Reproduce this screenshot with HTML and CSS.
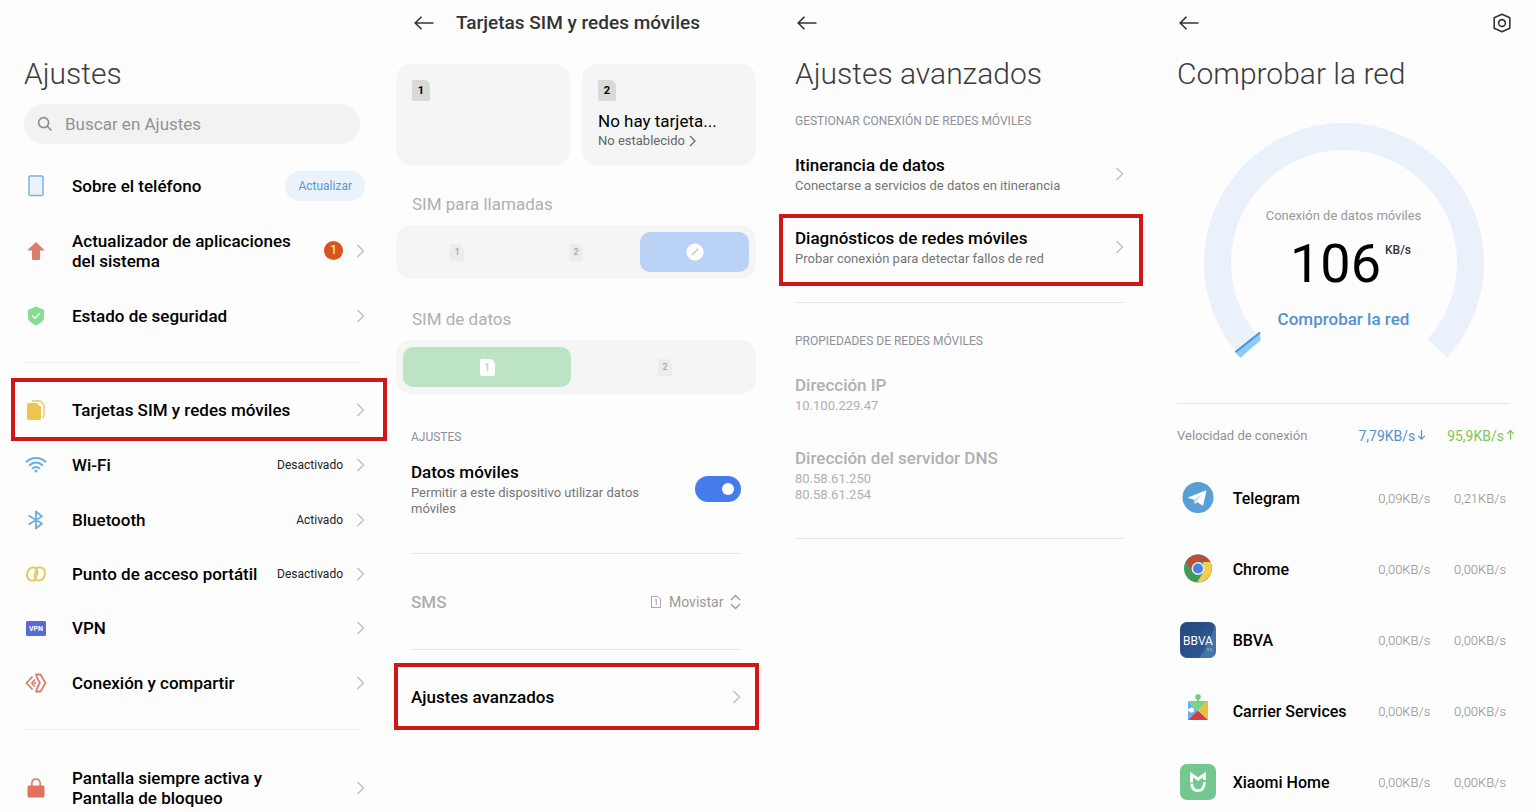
FILE: index.html
```html
<!DOCTYPE html>
<html lang="es">
<head>
<meta charset="utf-8">
<title>Ajustes</title>
<link rel="stylesheet" href="styles.css">
</head>
<body>
<svg class="defs" aria-hidden="true">
  <symbol id="chevron" viewBox="0 0 9 16"><path d="M1.500 2 7.500 8l-6 6" fill="none" stroke="currentColor" stroke-width="1.300"/></symbol>
  <symbol id="back" viewBox="0 0 20 16"><path d="M19.500 8H1.200M7.500 1.800 1.200 8l6.300 6.200" fill="none" stroke="currentColor" stroke-width="1.600"/></symbol>
</svg>
<main class="screens">

  <section class="screen screen-settings">
    <h1 class="title">Ajustes</h1>
    <label class="search">
      <svg width="16" height="16" viewBox="0 0 16 16" fill="none" stroke="#8c8c8c" stroke-width="1.600"><circle cx="6.600" cy="6.600" r="5"/><path d="m10.300 10.300 4.200 4.200"/></svg>
      <input type="search" placeholder="Buscar en Ajustes" aria-label="Buscar en Ajustes">
    </label>

    <nav class="list list-tall">
      <div class="row">
        <span class="row-icon"><svg width="16" height="22" viewBox="0 0 16 22"><rect x="1" y="1" width="14" height="19.500" rx="1" fill="#e8f3fd" stroke="#7fb2dc" stroke-width="1.500"/></svg></span>
        <span class="row-name">Sobre el teléfono</span>
        <button class="pill" type="button">Actualizar</button>
      </div>
      <a class="row" href="#">
        <span class="row-icon"><svg width="18" height="20" viewBox="0 0 18 20"><path d="M9 1 .8 8.800Q.6 9.600 1.400 9.600H5V18q0 1 1 1h6q1 0 1-1V9.600h3.600q.8 0 .6-.8z" fill="#df7d6c"/></svg></span>
        <span class="row-name">Actualizador de aplicaciones del sistema</span>
        <span class="badge">1</span>
        <svg class="chevron"><use href="#chevron"/></svg>
      </a>
      <a class="row" href="#">
        <span class="row-icon"><svg width="18" height="20" viewBox="0 0 18 20"><path d="M9 .5 17 4v8q0 3.500-8 7.500-8-4-8-7.500V4z" fill="#86dc91"/><path d="m5.300 9.500 2.700 2.700 4.800-4.900" fill="none" stroke="#fff" stroke-width="1.600"/></svg></span>
        <span class="row-name">Estado de seguridad</span>
        <svg class="chevron"><use href="#chevron"/></svg>
      </a>
    </nav>
    <hr class="rule">
    <nav class="list">
      <a class="row highlight" href="#">
        <span class="row-icon"><svg width="20" height="22" viewBox="0 0 20 22"><path d="M6 1.800h6.500q2 0 3.300 1.300 2.200 2 2.200 4V16q0 2.200-1.600 3" fill="none" stroke="#eed07a" stroke-width="1.700"/><path d="M3 4h7.500L15 8v11q0 2-2 2H3q-2 0-2-2V6q0-2 2-2z" fill="#ecc54a"/></svg></span>
        <span class="row-name">Tarjetas SIM y redes móviles</span>
        <svg class="chevron"><use href="#chevron"/></svg>
      </a>
    </nav>
    <nav class="list list-network">
      <a class="row" href="#">
        <span class="row-icon"><svg width="22" height="18" viewBox="0 0 22 18" fill="none" stroke="#6eaee0" stroke-width="2"><path d="M1 6.200Q5.500 2 11 2t10 4.200M4.200 9.700Q7.300 6.600 11 6.600t6.800 3.100M7.200 12.800Q9 11 11 11t3.800 1.800"/><circle cx="11" cy="15" r="1.500" fill="#6eaee0" stroke="none"/></svg></span>
        <span class="row-name">Wi-Fi</span>
        <span class="status">Desactivado</span>
        <svg class="chevron"><use href="#chevron"/></svg>
      </a>
      <a class="row" href="#">
        <span class="row-icon"><svg width="18" height="20" viewBox="0 0 18 20"><path d="m1.500 5.500 13.500 8L9 18.500v-17L15 6.500l-13.500 8" fill="none" stroke="#73addc" stroke-width="1.900" stroke-linejoin="round"/></svg></span>
        <span class="row-name">Bluetooth</span>
        <span class="status">Activado</span>
        <svg class="chevron"><use href="#chevron"/></svg>
      </a>
      <a class="row" href="#">
        <span class="row-icon"><svg width="22" height="18" viewBox="0 0 22 18" fill="none" stroke="#e6c960" stroke-width="2" stroke-linecap="round"><path d="M10.500 14.600C7 17.200 2 15 2 9.800 2 5 5.300 2.200 8.500 2.500c3.800.3 4.600 4.500 3.300 7.500L10.300 13"/><path d="M11.500 3.400C15 .8 20 3 20 8.200c0 4.800-3.300 7.600-6.500 7.300-3.800-.3-4.600-4.500-3.300-7.500L11.700 5"/></svg></span>
        <span class="row-name">Punto de acceso portátil</span>
        <span class="status">Desactivado</span>
        <svg class="chevron"><use href="#chevron"/></svg>
      </a>
      <a class="row" href="#">
        <span class="row-icon"><svg width="20" height="15" viewBox="0 0 20 15"><rect width="20" height="15" rx="1.500" fill="#5a68d8"/><text class="vpn-text" x="10" y="10" text-anchor="middle">VPN</text></svg></span>
        <span class="row-name">VPN</span>
        <svg class="chevron"><use href="#chevron"/></svg>
      </a>
      <a class="row" href="#">
        <span class="row-icon"><svg width="22" height="20" viewBox="0 0 22 20" fill="none" stroke="#d8806e" stroke-width="1.800" stroke-linejoin="round"><path d="M7.500 3.500 1.500 10l6 6.500M10 6.500 6.800 10l3.200 3.500M10 9v2"/><path d="M11 1.500h4.500l5 8.500-5 8.500H11l1.200-3.500L14.800 10 12.200 5z"/></svg></span>
        <span class="row-name">Conexión y compartir</span>
        <svg class="chevron"><use href="#chevron"/></svg>
      </a>
    </nav>
    <hr class="rule rule-lower">
    <nav class="list list-last">
      <a class="row" href="#">
        <span class="row-icon"><svg width="18" height="20" viewBox="0 0 18 20"><path d="M4.800 8V5.500Q4.800 1.200 9 1.200t4.200 4.300V8" fill="none" stroke="#d98372" stroke-width="1.700"/><rect x=".5" y="7.500" width="17" height="12" rx="1.500" fill="#e4715c"/></svg></span>
        <span class="row-name">Pantalla siempre activa y Pantalla de bloqueo</span>
        <svg class="chevron"><use href="#chevron"/></svg>
      </a>
    </nav>
  </section>

  <section class="screen screen-sim">
    <header class="bar">
      <button class="icon-button" type="button" aria-label="Atrás"><svg class="back"><use href="#back"/></svg></button>
      <h1 class="bar-title">Tarjetas SIM y redes móviles</h1>
    </header>
    <div class="cards">
      <article class="card"><span class="sim">1</span></article>
      <article class="card">
        <span class="sim">2</span>
        <h2 class="card-title">No hay tarjeta...</h2>
        <a class="card-link" href="#">No establecido <svg width="7" height="12" viewBox="0 0 7 12"><path d="m1 1 5 5-5 5" fill="none" stroke="#666" stroke-width="1.300"/></svg></a>
      </article>
    </div>
    <h2 class="group-label">SIM para llamadas</h2>
    <div class="segments">
      <label class="segment"><input type="radio" name="calls" disabled><span class="sim sim-faded">1</span></label>
      <label class="segment"><input type="radio" name="calls" disabled><span class="sim sim-faded">2</span></label>
      <label class="segment segment-blue"><input type="radio" name="calls" checked disabled aria-label="Ninguna"><svg width="18" height="18" viewBox="0 0 18 18"><circle cx="9" cy="9" r="8.600" fill="#fff"/><path d="m6 12 6-6" stroke="#bcc4d0" stroke-width="1.500"/></svg></label>
    </div>
    <h2 class="group-label">SIM de datos</h2>
    <div class="segments">
      <label class="segment segment-green"><input type="radio" name="data" checked disabled><span class="sim sim-white">1</span></label>
      <label class="segment"><input type="radio" name="data" disabled><span class="sim sim-faded">2</span></label>
    </div>
    <div class="sim-settings">
      <h2 class="section-label">AJUSTES</h2>
      <label class="option">
        <span class="option-text">
          <span class="option-name">Datos móviles</span>
          <span class="option-note">Permitir a este dispositivo utilizar datos móviles</span>
        </span>
        <input class="toggle" type="checkbox" checked>
      </label>
      <hr class="line">
      <div class="sms">
        <label class="sms-label" for="sms">SMS</label>
        <svg width="10" height="12" viewBox="0 0 10 12"><path d="M.5.500h6.500L9.500 3v8.500h-9z" fill="none" stroke="#aaa"/><path d="M3.800 4.200 5.300 3.500V9" fill="none" stroke="#aaa"/></svg>
        <select class="select" id="sms" disabled><option>Movistar</option></select>
        <svg width="11" height="16" viewBox="0 0 11 16" fill="none" stroke="#999" stroke-width="1.300"><path d="M1 6 5.500 1.500 10 6M1 10l4.500 4.500L10 10"/></svg>
      </div>
      <hr class="line">
    </div>
    <a class="advanced highlight" href="#">
      <span class="option-name">Ajustes avanzados</span>
      <svg class="chevron"><use href="#chevron"/></svg>
    </a>
  </section>

  <section class="screen screen-advanced">
    <header class="bar">
      <button class="icon-button" type="button" aria-label="Atrás"><svg class="back"><use href="#back"/></svg></button>
    </header>
    <h1 class="title">Ajustes avanzados</h1>
    <h2 class="section-label">GESTIONAR CONEXIÓN DE REDES MÓVILES</h2>
    <a class="option" href="#">
      <span class="option-text">
        <span class="option-name">Itinerancia de datos</span>
        <span class="option-note">Conectarse a servicios de datos en itinerancia</span>
      </span>
      <svg class="chevron"><use href="#chevron"/></svg>
    </a>
    <a class="option diagnostics highlight" href="#">
      <span class="option-text">
        <span class="option-name">Diagnósticos de redes móviles</span>
        <span class="option-note">Probar conexión para detectar fallos de red</span>
      </span>
      <svg class="chevron"><use href="#chevron"/></svg>
    </a>
    <hr class="line">
    <h2 class="section-label section-properties">PROPIEDADES DE REDES MÓVILES</h2>
    <dl class="properties">
      <div class="property"><dt>Dirección IP</dt><dd>10.100.229.47</dd></div>
      <div class="property"><dt>Dirección del servidor DNS</dt><dd>80.58.61.250</dd><dd>80.58.61.254</dd></div>
    </dl>
    <hr class="line">
  </section>

  <section class="screen screen-network">
    <header class="bar">
      <button class="icon-button" type="button" aria-label="Atrás"><svg class="back"><use href="#back"/></svg></button>
      <button class="icon-button" type="button" aria-label="Configuración"><svg width="20" height="20" viewBox="0 0 20 20" fill="none" stroke="#333" stroke-width="1.600" stroke-linejoin="round"><path d="m10 1.300 7.800 3.500v10.400L10 18.700l-7.800-3.500V4.800z"/><circle cx="10" cy="10" r="3.400"/></svg></button>
    </header>
    <h1 class="title">Comprobar la red</h1>
    <div class="gauge">
      <svg class="gauge-arc" width="280" height="236" viewBox="0 0 280 236"><path d="M46.600 225.300A126.500 126.500 0 1 1 233.400 225.300" fill="none" stroke="#ebf1fb" stroke-width="27"/><path d="m31 229 5.500 6q9-9 20-17.500l-.5-8.500z" fill="#8acbfa"/><path d="M31.500 229 56 209.500" stroke="#4c8fcb" stroke-width="1.800"/></svg>
      <div class="gauge-info">
        <span class="gauge-note">Conexión de datos móviles</span>
        <p class="speed"><span class="speed-number">106</span><span class="speed-unit">KB/s</span></p>
        <a class="check" href="#">Comprobar la red</a>
      </div>
    </div>
    <hr class="line line-network">
    <table class="apps">
      <thead>
        <tr><th class="apps-caption" colspan="2">Velocidad de conexión</th><th class="down">7,79KB/s<svg width="9" height="12" viewBox="0 0 9 12"><path d="M4.500 1v9M1.200 6.800l3.300 3.400 3.300-3.400" fill="none" stroke="currentColor" stroke-width="1.200"/></svg></th><th class="up">95,9KB/s<svg width="9" height="12" viewBox="0 0 9 12"><path d="M4.500 10.500V1.500M1.200 4.900l3.300-3.400 3.300 3.400" fill="none" stroke="currentColor" stroke-width="1.200"/></svg></th></tr>
      </thead>
      <tbody>
        <tr><td class="app-icon"><svg width="38" height="38" viewBox="0 0 38 38"><circle cx="19" cy="18.500" r="15.500" fill="#5a9fd4"/><path d="m8.500 18.700 18-7.200q1-.3.800.9l-3 13.400q-.4 1.200-1.400.5l-4.600-3.400-2.400 2.300-.8-4.400z" fill="#fff"/><path d="m15.100 20.800 9-6.100-6.800 7-.6 3z" fill="#bfd9ee"/></svg></td><th class="app-name">Telegram</th><td class="rate">0,09KB/s</td><td class="rate rate-up">0,21KB/s</td></tr>
        <tr><td class="app-icon"><svg width="38" height="38" viewBox="0 0 38 38"><circle cx="19" cy="18.500" r="14" fill="#429b59"/><path d="M30.900 11Q34.500 18 31.500 24.500 27 32.300 18 32.500L24.800 21.500 24 12z" fill="#f0d04c"/><path d="M6.900 11.500A14 14 0 0 1 31.100 11.500v.5H19l-6.200 9.700z" fill="#bd4c40"/><circle cx="19" cy="18.500" r="6.500" fill="#e7f0f3"/><circle cx="19" cy="18.500" r="5" fill="#4d82df"/></svg></td><th class="app-name">Chrome</th><td class="rate">0,00KB/s</td><td class="rate rate-up">0,00KB/s</td></tr>
        <tr><td class="app-icon"><svg width="38" height="38" viewBox="0 0 38 38"><defs><linearGradient id="bbva" x1="0" x2="1" y1="0" y2="1"><stop offset="0" stop-color="#25467c"/><stop offset="1" stop-color="#315f9c"/></linearGradient></defs><rect x="1" y="1" width="36" height="36" rx="7" fill="url(#bbva)"/><path d="M36 4Q30 24 20 37h10q7 0 7-7V8z" fill="#5191b9" opacity=".5"/><text class="bbva-text" x="19" y="23.500" text-anchor="middle">BBVA</text><path d="M28 27h2v3h-2zM31 27h2v3h-2z" fill="#8ab9d6" opacity=".6"/></svg></td><th class="app-name">BBVA</th><td class="rate">0,00KB/s</td><td class="rate rate-up">0,00KB/s</td></tr>
        <tr><td class="app-icon"><svg width="38" height="38" viewBox="0 0 38 38"><path d="M9 9l10 10L9 28z" fill="#62b1ee"/><path d="M9 9h20L19 19z" fill="#7bd47f"/><path d="M29 9v19l-9.500-9.500z" fill="#edbd3f"/><path d="M9 28l10-9.500L29 28z" fill="#d53d43"/><circle cx="19" cy="5" r="2.800" fill="#72cc82"/><path d="M18 6h2v4h-2z" fill="#72cc82"/><circle cx="12.500" cy="18" r="2.600" fill="#fdfdfd"/><path d="M8.500 17h3v2h-3z" fill="#fdfdfd"/></svg></td><th class="app-name">Carrier Services</th><td class="rate">0,00KB/s</td><td class="rate rate-up">0,00KB/s</td></tr>
        <tr><td class="app-icon"><svg width="38" height="38" viewBox="0 0 38 38"><rect x="1" y="1" width="36" height="36" rx="7" fill="#74c78f"/><path d="M12.500 19.500V11.500l6.500 4.700 6.500-4.700v5.500M12.600 20.700q.9 7 6.400 7 6 0 6.600-8.700" fill="none" stroke="#fff" stroke-width="2.800"/></svg></td><th class="app-name">Xiaomi Home</th><td class="rate">0,00KB/s</td><td class="rate rate-up">0,00KB/s</td></tr>
      </tbody>
    </table>
  </section>
</main>
</body>
</html>
```
FILE: styles.css
```css
* { box-sizing: border-box; }
body { margin: 0; background: #fdfdfd; color: #000; font-family: Roboto, "Liberation Sans", sans-serif; font-size: 17px; }
h1, h2, p, dl, dd { margin: 0; font-size: 17px; font-weight: 400; }
a { color: inherit; text-decoration: none; }
button { border: 0; padding: 0; background: none; font: inherit; cursor: pointer; }
svg { flex: none; display: block; }
hr { border: 0; height: 1px; }
.defs { display: none; }

.screens { display: grid; grid-template-columns: repeat(4, minmax(0, 1fr)); }
.title { margin-top: 10px; color: #3c3c3c; font-size: 30px; font-weight: 300; line-height: 36px; }
.bar { display: flex; align-items: center; height: 46px; }
.icon-button { color: #333; }
.back { width: 20px; height: 16px; }
.chevron { width: 9px; height: 16px; color: #bdbdbd; }
.highlight { border: 4px solid #cf1717; }
.line { margin: 0; background: #e6e6e6; }
.section-label { color: #8d9096; font-size: 12px; line-height: 18px; }

/* Settings list */
.screen-settings { padding: 46px 24px 0; }
.search { display: flex; align-items: center; gap: 12px; height: 40px; margin-top: 12px; padding: 0 14px 0 13px; border-radius: 20px; background: #f2f2f2; }
.search input { flex: 1; min-width: 0; padding: 0; border: 0; outline: 0; background: none; color: #333; font: inherit; }
.search input::placeholder { color: #929292; opacity: 1; }
.list { display: grid; margin-right: -5px; }
.list-tall { grid-auto-rows: 65px; margin-top: 9px; }
.list-network { grid-auto-rows: 1fr; height: 272px; margin-top: -3px; }
.row { display: flex; align-items: center; }
.row-icon { display: flex; justify-content: center; width: 24px; margin-right: 24px; }
.row-name { flex: 1; padding-right: 16px; font-weight: 500; line-height: 20px; }
.row .chevron { margin-left: 13px; }
.status { color: #222; font-size: 12px; }
.list .highlight { height: 63px; margin: 0 -22px 0 -13px; padding: 0 18px 0 9px; }
.badge { width: 19px; height: 19px; border-radius: 50%; background: #d9541c; color: #fff; font-size: 12px; line-height: 19px; text-align: center; }
.pill { height: 30px; padding: 0 13px; border-radius: 15px; background: #eaf2fc; color: #5b98cf; font-size: 12px; }
.rule { margin: 14px 0 15px; background: #efefef; }
.rule-lower { margin: 19px 0 38px; }
.vpn-text { fill: #fff; font-size: 7px; font-weight: 700; }

/* SIM cards */
.screen-sim { padding: 0 12px; }
.screen-sim .bar { padding-left: 18px; gap: 22px; }
.bar-title { color: #333; font-size: 19px; font-weight: 500; line-height: 22px; white-space: nowrap; }
.cards { display: grid; grid-template-columns: 1fr 1fr; gap: 12px; margin-top: 18px; }
.card { min-height: 101px; padding: 16px 16px 14px; border-radius: 15px; background: #f5f5f5; }
.sim { display: block; width: 18px; height: 21px; border-radius: 2px 6px 2px 2px; background: #d9d9d9; font-size: 11px; font-weight: 700; line-height: 21px; text-align: center; }
.sim-faded { width: 14px; height: 17px; background: #ececec; color: #a4a4a4; font-size: 9px; font-weight: 500; line-height: 17px; }
.sim-white { width: 15px; height: 17px; background: #fff; color: #c9d4cb; font-size: 10px; line-height: 17px; }
.card-title { margin-top: 9px; line-height: 22px; }
.card-link { display: flex; align-items: center; gap: 4px; color: #666; font-size: 13px; line-height: 18px; }
.group-label { margin: 29px 0 11px 16px; color: #b0b0b0; line-height: 20px; }
.segments { display: grid; grid-auto-flow: column; grid-auto-columns: 1fr; gap: 10px; padding: 7px; border-radius: 15px; background: #f5f5f5; }
.segments + .group-label { margin-top: 30px; }
.segment { display: flex; align-items: center; justify-content: center; height: 40px; border-radius: 10px; }
.segment input { appearance: none; width: 0; height: 0; margin: 0; }
.segment-blue { background: #b9d2f6; }
.segment-green { background: #bce4c4; }
.sim-settings { margin: 34px 15px 0; }
.option { display: flex; align-items: center; }
.option-text { flex: 1; display: grid; gap: 2px; }
.option-name { font-weight: 500; line-height: 22px; }
.option-note { color: #757575; font-size: 13px; line-height: 16px; }
.sim-settings .option { margin: 15px 0 36px; }
.sim-settings .option-text { padding-right: 44px; }
.toggle { appearance: none; flex: none; display: flex; align-items: center; width: 46px; height: 26px; margin: 0; padding: 0 7px; border-radius: 13px; background: #bbb; }
.toggle:checked { justify-content: flex-end; background: #447ceb; }
.toggle::before { content: ""; width: 12px; height: 12px; border-radius: 50%; background: #fff; }
.sms { display: flex; align-items: center; height: 95px; }
.sms-label { flex: 1; color: #aeaeae; font-weight: 500; }
.select { appearance: none; margin: 0 6px 0 8px; padding: 0; border: 0; background: none; color: #999; font: inherit; font-size: 14px; opacity: 1; }
.advanced { display: flex; align-items: center; justify-content: space-between; height: 67px; margin: 13px -3px 0 -2px; padding: 0 14px 0 13px; }

/* Advanced settings */
.screen-advanced { padding: 0 28px 0 27px; }
.screen-advanced .bar, .screen-network .bar { padding-left: 2px; }
.screen-advanced .section-label { margin: 20px 0 24px; }
.diagnostics { margin: 20px -19px 16px -16px; padding: 9px 15px 15px 12px; }
.screen-advanced .section-properties { margin-top: 29px; }
.properties { display: grid; gap: 33px; margin-bottom: 35px; color: #b0b0b0; }
.property dt { margin-bottom: 2px; font-weight: 500; line-height: 22px; }
.property dd { font-size: 13px; line-height: 16px; }

/* Network check */
.screen-network { padding: 0 26px 0 25px; }
.screen-network .bar { justify-content: space-between; margin-right: -2px; }
.gauge { display: grid; justify-items: center; margin-top: 31px; }
.gauge-arc, .gauge-info { grid-area: 1 / 1; }
.gauge-info { display: flex; flex-direction: column; align-items: center; padding-top: 85px; }
.gauge-note { color: #999; font-size: 13px; line-height: 16px; }
.speed { display: flex; align-items: flex-start; gap: 4px; margin: 10px 0 15px; padding-left: 14px; }
.speed-number { font-size: 54px; font-weight: 400; line-height: 60px; }
.speed-unit { padding-top: 8px; color: #333; font-size: 12px; font-weight: 500; line-height: 16px; }
.check { color: #5392d0; font-weight: 500; line-height: 20px; }
.line-network { margin-top: 44px; }
.apps { width: calc(100% + 5px); margin-top: 22px; border-collapse: collapse; }
.apps th, .apps td { padding: 0 0 33px; text-align: left; font-weight: 400; }
.apps tr:last-child td, .apps tr:last-child th { padding-bottom: 0; }
.apps thead tr:last-child th { padding-bottom: 33px; font-size: 14px; line-height: 20px; text-align: right; white-space: nowrap; }
.apps thead svg { display: inline-block; margin-left: 2px; }
.apps thead tr .apps-caption:first-child { color: #8e9298; font-size: 13px; text-align: left; }
.apps .down { width: 84px; padding-right: 4px; color: #5392d0; }
.apps .up { width: 85px; color: #83c255; }
.apps .app-icon { width: 56px; padding-left: 2px; }
.apps .app-name { font-size: 16px; font-weight: 500; white-space: nowrap; }
.apps .rate { color: #8c8c8c; font-size: 13px; font-weight: 300; text-align: right; }
.apps .rate-up { padding-right: 9px; }
.bbva-text { fill: #fff; font-size: 12px; font-weight: 400; }
```
